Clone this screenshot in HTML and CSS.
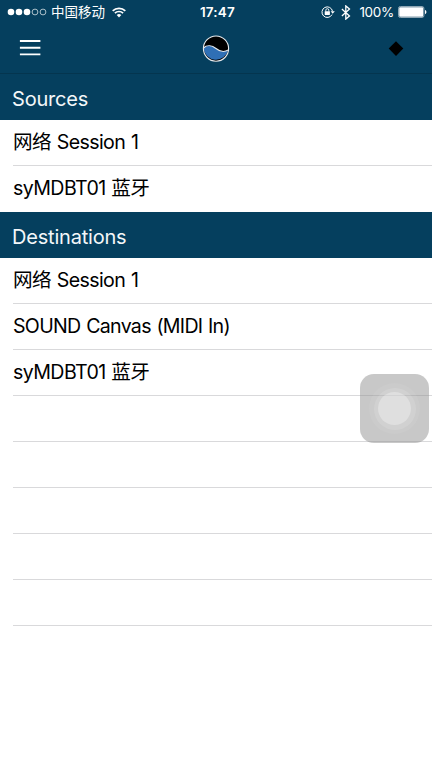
FILE: index.html
```html
<!DOCTYPE html>
<html lang="zh-CN">
  <head>
    <meta charset="UTF-8" />
    <meta name="viewport" content="width=device-width, initial-scale=1.0" />
    <title>MIDI</title>
    <link rel="stylesheet" href="styles.css">
  </head>
  <body>
    <header>
      <div class="statusBar">
        <div class="statusLeft">
          <svg class="signal" width="40" height="8" viewBox="0 0 40 8">
            <g fill="#fff">
              <circle cx="4" cy="4" r="3.3" />
              <circle cx="12" cy="4" r="3.3" />
              <circle cx="20" cy="4" r="3.3" />
            </g>
            <g fill="none" stroke="#d5dfe5" stroke-width="0.8">
              <circle cx="28" cy="4" r="2.9" />
              <circle cx="36" cy="4" r="2.9" />
            </g>
          </svg>
          <span class="carrier">中国移动</span>
          <svg width="14" height="11" viewBox="0 0 14 11">
            <path d="M0.7 3.9a9 9 0 0 1 12.6 0M2.9 6.2a5.8 5.8 0 0 1 8.2 0" fill="none" stroke="#fff" stroke-width="1.7" />
            <path d="M4.7 8.1a3.3 3.3 0 0 1 4.6 0L7 10.5z" fill="#fff" />
          </svg>
        </div>
        <div class="clock">17:47</div>
        <div class="statusRight">
          <svg width="14" height="12" viewBox="0 0 14 12">
            <path d="M11 8.6A5.3 5.3 0 1 1 11.5 5.2" fill="none" stroke="#fff" stroke-width="1" />
            <path d="M9.6 5.2h4.2l-2.1 2.5z" fill="#fff" />
            <rect x="3.7" y="5.2" width="5.2" height="3.7" rx="0.4" fill="#fff" />
            <path d="M4.8 5.5V4.2a1.5 1.5 0 0 1 3 0v1.3" fill="none" stroke="#fff" stroke-width="0.9" />
          </svg>
          <svg class="bluetooth" width="10" height="15" viewBox="0 0 10 15">
            <path d="M0.9 4L8.5 10.9 4.8 14.1V0.9L8.5 4.1 0.9 11" fill="none" stroke="#fff" stroke-width="1.3" />
          </svg>
          <span class="percent">100%</span>
          <svg width="29" height="12" viewBox="0 0 29 12">
            <rect x="0.5" y="0.5" width="25.4" height="11" rx="1.8" fill="none" stroke="#8fa7b5" />
            <rect x="1.2" y="1.2" width="24" height="9.6" rx="1" fill="#fff" />
            <path d="M27 4c1.9 0.6 1.9 3.6 0 4.2z" fill="#fff" />
          </svg>
        </div>
      </div>

      <nav class="navBar">
        <svg class="menu" width="22" height="18" viewBox="0 0 22 18">
          <path d="M0.9 2h20.5M0.9 8.7h20.5M0.9 15.4h20.5" stroke="#fff" stroke-width="1.9" />
        </svg>
        <svg class="logo" width="28" height="28" viewBox="0 0 28 28">
          <circle cx="14" cy="13.6" r="12.6" fill="#000" />
          <path d="M1.5 13C5 9.5 10 10.2 14 13.5S22.5 17.1 26.3 15.1A12.6 12.6 0 0 1 1.5 13z" fill="#2f6fb5" />
          <path d="M1.5 13C5 9.5 10 10.2 14 13.5S22.5 17.1 26.3 15.1" fill="none" stroke="#e6eaee" stroke-width="1.1" />
          <circle cx="14" cy="13.6" r="12.6" fill="none" stroke="#e6eaee" stroke-width="1.1" />
        </svg>
        <svg class="diamond" width="16" height="16" viewBox="0 0 16 16">
          <path d="M8 0.3L15.3 7.6 8 14.9 0.7 7.6z" fill="#000" />
        </svg>
      </nav>
    </header>

    <main>
      <section>
        <h2>Sources</h2>
        <ul class="deviceList">
          <li>网络 Session 1</li>
          <li>syMDBT01 蓝牙</li>
        </ul>
      </section>

      <section>
        <h2>Destinations</h2>
        <ul class="deviceList">
          <li>网络 Session 1</li>
          <li class="synth">SOUND Canvas (MIDI In)</li>
          <li>syMDBT01 蓝牙</li>
          <li></li>
          <li></li>
          <li></li>
          <li></li>
          <li></li>
        </ul>
      </section>
    </main>

    <!-- floating touch button -->
    <div class="assistiveTouch">
      <div class="ringOuter">
        <div class="ringMiddle">
          <div class="ringInner"></div>
        </div>
      </div>
    </div>
  </body>
</html>
```
FILE: styles.css
```css
* {
  box-sizing: border-box;
}

body {
  margin: 0;
  height: 768px;
  overflow: hidden;
  background-color: #fff;
  color: #000;
  font-family: Inter, "Noto Sans CJK SC", sans-serif;
}

svg {
  display: block;
  flex: none;
}

/* Header */
header {
  height: 74px;
  background-color: #053f5e;
  border-bottom: 1px solid #04354f;
  color: #fff;
}

.statusBar {
  display: grid;
  grid-template-columns: 1fr auto 1fr;
  align-items: center;
  height: 24px;
  padding: 0 5px 0 7px;
  font-size: 13.5px;
  line-height: 24px;
  white-space: nowrap;
}

.statusLeft,
.statusRight {
  display: flex;
  align-items: center;
}

.statusRight {
  justify-content: flex-end;
}

.carrier {
  margin: 0 7px 0 4px;
}

.clock {
  padding-left: 1px;
  font-size: 13.5px;
  font-weight: 600;
  letter-spacing: 0.2px;
}

.bluetooth {
  margin: 0 8px 0 6px;
}

.percent {
  margin-right: 4px;
  letter-spacing: -0.3px;
}

.navBar {
  display: grid;
  grid-template-columns: 1fr auto 1fr;
  align-items: center;
  height: 49px;
  padding: 0 28px 0 19px;
}

.menu {
  margin-bottom: 2px;
}

.logo {
  margin-left: 9px;
}

.diamond {
  justify-self: end;
}

/* Section titles */
h2 {
  display: flex;
  align-items: center;
  height: 46px;
  margin: 0;
  padding: 3px 0 0 12px;
  background-color: #053f5e;
  color: #f3f7f9;
  font-size: 20px;
  font-weight: 400;
  letter-spacing: -0.2px;
}

/* Device rows */
.deviceList {
  margin: 0;
  padding: 0 0 0 13px;
  list-style: none;
}

.deviceList li {
  height: 46px;
  border-bottom: 1px solid #d9d9db;
  font-size: 19.6px;
  line-height: 45px;
  letter-spacing: -0.6px;
  word-spacing: 0.8px;
  white-space: nowrap;
}

.deviceList .synth {
  letter-spacing: -0.7px;
}

section:first-child .deviceList li:last-child {
  border-bottom: none;
}

/* Touch button */
.assistiveTouch {
  position: absolute;
  top: 374px;
  left: 360px;
  display: flex;
  align-items: center;
  justify-content: center;
  width: 69px;
  height: 69px;
  border-radius: 14px;
  background-color: rgba(145, 145, 145, 0.5);
}

.ringOuter,
.ringMiddle,
.ringInner {
  display: flex;
  align-items: center;
  justify-content: center;
  border-radius: 50%;
}

.ringOuter {
  width: 51px;
  height: 51px;
  background-color: rgba(255, 255, 255, 0.06);
}

.ringMiddle {
  width: 42px;
  height: 42px;
  background-color: rgba(255, 255, 255, 0.12);
}

.ringInner {
  width: 33px;
  height: 33px;
  background-color: rgba(255, 255, 255, 0.3);
}
```
